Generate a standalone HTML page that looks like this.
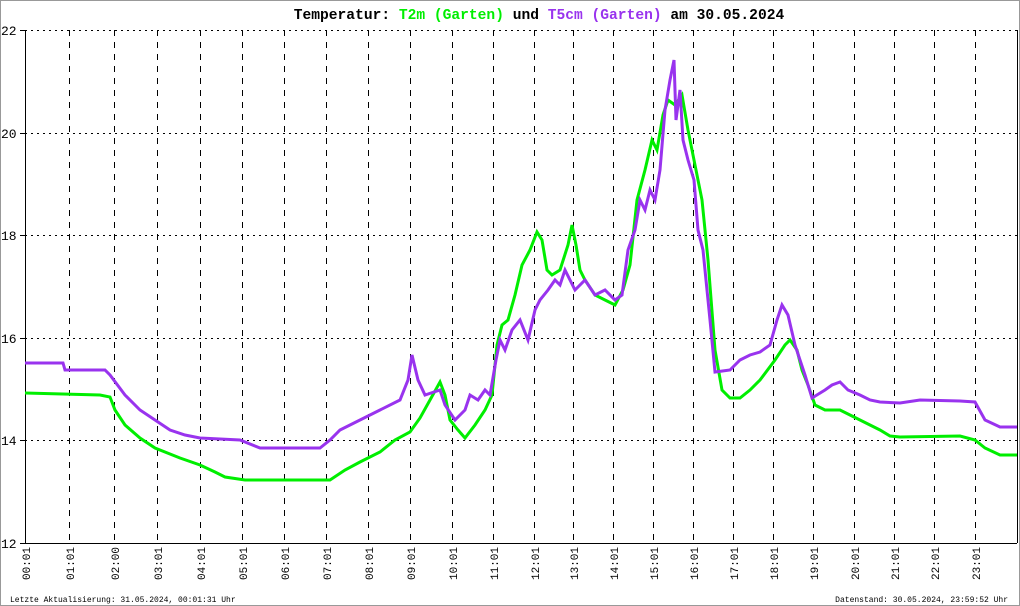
<!DOCTYPE html>
<html><head><meta charset="utf-8"><style>
html,body{margin:0;padding:0;background:#fff}
svg{display:block}
text{font-family:"Liberation Mono","DejaVu Sans Mono",monospace}
</style></head><body>
<svg width="1020" height="606" viewBox="0 0 1020 606" xmlns="http://www.w3.org/2000/svg">
<rect x="0.5" y="0.5" width="1019" height="605" fill="#fff" stroke="#999"/>
<text x="539" y="19" font-size="14.6" font-weight="bold" text-anchor="middle"><tspan fill="#000">Temperatur: </tspan><tspan fill="#00ee00">T2m (Garten)</tspan><tspan fill="#000"> und </tspan><tspan fill="#9933ee">T5cm (Garten)</tspan><tspan fill="#000"> am 30.05.2024</tspan></text>
<g stroke="#000" stroke-width="1" stroke-dasharray="2,4" fill="none">
<line x1="25" y1="30.5" x2="1017" y2="30.5"/>
<line x1="25" y1="133.5" x2="1017" y2="133.5"/>
<line x1="25" y1="235.5" x2="1017" y2="235.5"/>
<line x1="25" y1="338.5" x2="1017" y2="338.5"/>
<line x1="25" y1="440.5" x2="1017" y2="440.5"/>
</g>
<g stroke="#000" stroke-width="1" stroke-dasharray="6,6" fill="none">
<line x1="69.5" y1="30" x2="69.5" y2="543"/>
<line x1="114.5" y1="30" x2="114.5" y2="543"/>
<line x1="157.5" y1="30" x2="157.5" y2="543"/>
<line x1="200.5" y1="30" x2="200.5" y2="543"/>
<line x1="242.5" y1="30" x2="242.5" y2="543"/>
<line x1="284.5" y1="30" x2="284.5" y2="543"/>
<line x1="326.5" y1="30" x2="326.5" y2="543"/>
<line x1="368.5" y1="30" x2="368.5" y2="543"/>
<line x1="410.5" y1="30" x2="410.5" y2="543"/>
<line x1="452.5" y1="30" x2="452.5" y2="543"/>
<line x1="493.5" y1="30" x2="493.5" y2="543"/>
<line x1="534.5" y1="30" x2="534.5" y2="543"/>
<line x1="573.5" y1="30" x2="573.5" y2="543"/>
<line x1="613.5" y1="30" x2="613.5" y2="543"/>
<line x1="653.5" y1="30" x2="653.5" y2="543"/>
<line x1="693.5" y1="30" x2="693.5" y2="543"/>
<line x1="733.5" y1="30" x2="733.5" y2="543"/>
<line x1="773.5" y1="30" x2="773.5" y2="543"/>
<line x1="813.5" y1="30" x2="813.5" y2="543"/>
<line x1="854.5" y1="30" x2="854.5" y2="543"/>
<line x1="894.5" y1="30" x2="894.5" y2="543"/>
<line x1="934.5" y1="30" x2="934.5" y2="543"/>
<line x1="975.5" y1="30" x2="975.5" y2="543"/>
</g>
<g stroke="#000" stroke-width="1">
<line x1="25.5" y1="30" x2="25.5" y2="543"/>
<line x1="20" y1="543.5" x2="1017" y2="543.5"/>
<line x1="1017.5" y1="30" x2="1017.5" y2="543"/>
<line x1="20" y1="30.5" x2="25" y2="30.5"/>
<line x1="20" y1="133.5" x2="25" y2="133.5"/>
<line x1="20" y1="235.5" x2="25" y2="235.5"/>
<line x1="20" y1="338.5" x2="25" y2="338.5"/>
<line x1="20" y1="440.5" x2="25" y2="440.5"/>
</g>
<g font-size="13" fill="#000">
<text x="1" y="35">22</text><text x="1" y="138">20</text><text x="1" y="240">18</text>
<text x="1" y="343">16</text><text x="1" y="445">14</text><text x="1" y="548">12</text>
</g>
<g font-size="11" fill="#000">
<text transform="translate(30,580) rotate(-90)">00:01</text>
<text transform="translate(74,580) rotate(-90)">01:01</text>
<text transform="translate(119,580) rotate(-90)">02:00</text>
<text transform="translate(162,580) rotate(-90)">03:01</text>
<text transform="translate(205,580) rotate(-90)">04:01</text>
<text transform="translate(247,580) rotate(-90)">05:01</text>
<text transform="translate(289,580) rotate(-90)">06:01</text>
<text transform="translate(331,580) rotate(-90)">07:01</text>
<text transform="translate(373,580) rotate(-90)">08:01</text>
<text transform="translate(415,580) rotate(-90)">09:01</text>
<text transform="translate(457,580) rotate(-90)">10:01</text>
<text transform="translate(498,580) rotate(-90)">11:01</text>
<text transform="translate(539,580) rotate(-90)">12:01</text>
<text transform="translate(578,580) rotate(-90)">13:01</text>
<text transform="translate(618,580) rotate(-90)">14:01</text>
<text transform="translate(658,580) rotate(-90)">15:01</text>
<text transform="translate(698,580) rotate(-90)">16:01</text>
<text transform="translate(738,580) rotate(-90)">17:01</text>
<text transform="translate(778,580) rotate(-90)">18:01</text>
<text transform="translate(818,580) rotate(-90)">19:01</text>
<text transform="translate(859,580) rotate(-90)">20:01</text>
<text transform="translate(899,580) rotate(-90)">21:01</text>
<text transform="translate(939,580) rotate(-90)">22:01</text>
<text transform="translate(980,580) rotate(-90)">23:01</text>
</g>
<g font-size="8" fill="#000">
<text x="10" y="602">Letzte Aktualisierung: 31.05.2024, 00:01:31 Uhr</text>
<text x="1008" y="602" text-anchor="end">Datenstand: 30.05.2024, 23:59:52 Uhr</text>
</g>
<polyline fill="none" stroke="#00ee00" stroke-width="3" stroke-linejoin="miter" points="25,393 100,395 110,397 115,410 125,425 140,438 155,448 180,458 200,465 215,472 225,477 245,480 330,480 345,470 360,462 380,452 395,440 410,432 420,418 430,400 440,382 445,395 450,420 458,430 465,438 475,425 485,410 492,395 497,345 502,325 508,320 515,295 522,265 530,250 537,232 542,240 547,270 552,275 560,270 568,245 572,225 576,245 580,270 585,280 595,295 605,300 615,305 623,290 630,265 637,200 645,170 652,140 657,150 663,115 668,100 675,105 682,95 688,130 695,165 702,200 708,260 715,350 722,390 730,398 740,398 750,390 760,380 775,360 785,345 790,340 797,350 802,370 808,385 815,405 825,410 840,410 850,415 860,420 870,425 880,430 890,436 900,437 960,436 975,440 985,448 1000,455 1017,455"/>
<polyline fill="none" stroke="#9933ee" stroke-width="3" stroke-linejoin="miter" points="25,363 63,363 65,370 105,370 110,375 125,395 140,410 155,420 170,430 185,435 200,438 240,440 260,448 320,448 330,440 340,430 360,420 380,410 400,400 408,380 412,355 418,380 425,395 440,390 445,405 455,420 465,410 470,395 478,400 485,390 490,395 496,360 500,340 505,350 512,330 520,320 528,340 535,310 540,300 548,290 555,280 560,285 565,270 575,290 585,280 595,295 605,290 615,300 622,295 628,250 635,230 640,200 645,210 650,190 655,200 660,170 665,110 670,80 674,60 676,120 680,90 683,140 688,160 694,180 698,230 703,250 710,320 715,372 730,370 740,360 750,355 760,352 770,345 777,320 782,305 788,315 795,345 805,375 812,398 825,390 832,385 840,382 848,390 860,395 870,400 880,402 900,403 920,400 960,401 975,402 985,420 1000,427 1017,427"/>
</svg>
</body></html>
